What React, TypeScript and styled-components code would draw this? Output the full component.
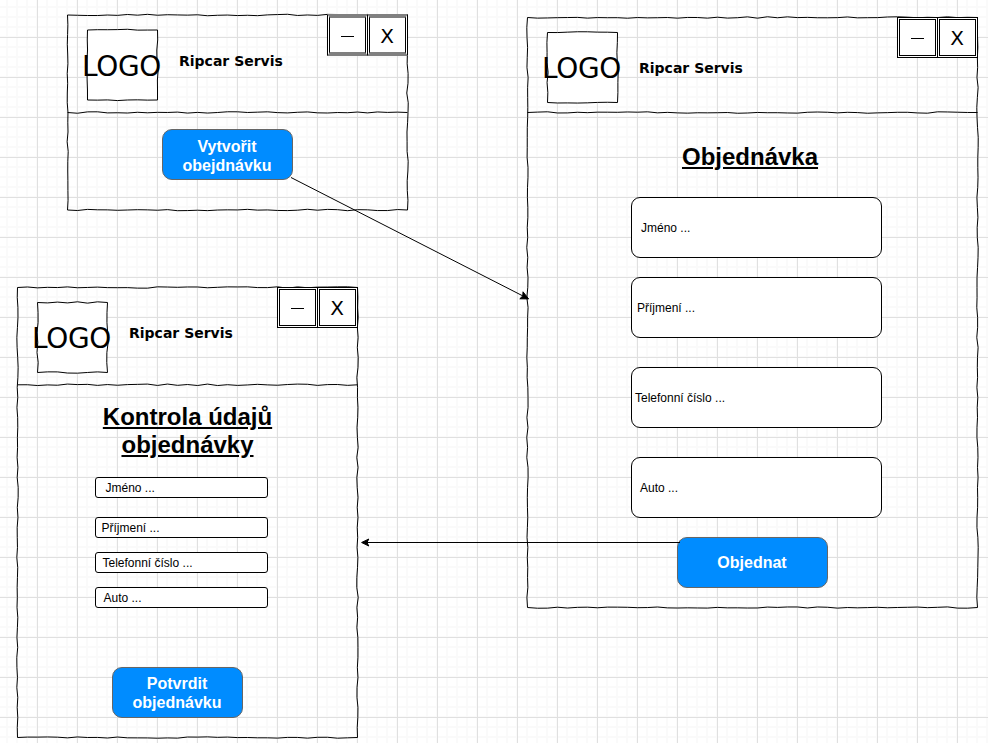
import React from 'react';
import styled, { createGlobalStyle } from 'styled-components';

const GlobalStyle = createGlobalStyle`
  *, *::before, *::after { box-sizing: border-box; }
  html, body { margin: 0; padding: 0; overflow: hidden; background: #fff; }
`;

const Canvas = styled.main`
  position: relative;
  width: 988px;
  height: 743px;
  overflow: hidden;
  color: #000;
  font-family: 'Liberation Sans', Arial, sans-serif;
  background-color: #fff;
  background-image:
    linear-gradient(to right, #e0e0e0 1px, transparent 1px),
    linear-gradient(to bottom, #e0e0e0 1px, transparent 1px),
    linear-gradient(to right, #fafafa 2px, transparent 2px),
    linear-gradient(to bottom, #fafafa 2px, transparent 2px);
  background-size: 40px 40px, 40px 40px, 10px 10px, 10px 10px;
  background-position: 37px 37px, 37px 37px, 6px 6px, 6px 6px;
`;

const Window = styled.section<{ $x: number; $y: number; $w: number; $h: number }>`
  position: absolute;
  left: ${p => p.$x}px;
  top: ${p => p.$y}px;
  width: ${p => p.$w}px;
  height: ${p => p.$h}px;
  display: flex;
  flex-direction: column;
`;

const Drawing = styled.svg`
  position: absolute;
  left: 0;
  top: 0;
  overflow: visible;
  pointer-events: none;
  fill: none;
  stroke: #000;
`;

const Header = styled.header<{ $h: number }>`
  display: flex;
  align-items: flex-start;
  flex: none;
  height: ${p => p.$h}px;
  padding-left: 20px;
`;

const LogoBox = styled.div<{ $top: number; $drop: number }>`
  position: relative;
  display: flex;
  align-items: center;
  justify-content: center;
  flex: none;
  width: 71px;
  height: 71px;
  margin-top: ${p => p.$top}px;
  padding: ${p => p.$drop}px 2px 0 0;
`;

const LogoText = styled.span`
  position: relative;
  font: 28px/32px 'DejaVu Sans', Verdana, sans-serif;
  letter-spacing: -0.4px;
  white-space: nowrap;
`;

const Brand = styled.strong<{ $top: number }>`
  margin: ${p => p.$top}px 0 0 21px;
  font: bold 14px/18px 'DejaVu Sans', Verdana, sans-serif;
  white-space: nowrap;
`;

const Controls = styled.div`
  position: relative;
  display: flex;
  margin-left: auto;
`;

const Control = styled.button<{ $soft?: boolean }>`
  width: 41px;
  height: ${p => (p.$soft ? 42 : 41)}px;
  margin: 0;
  padding: 0 1px 0 0;
  border: 3px double #000;
  ${p => p.$soft && 'border-top: 4px solid #808080; border-bottom: 4px solid #808080; padding-top: 2px;'}
  background: #fff;
  color: #000;
  font: 20px/30px 'DejaVu Sans', Verdana, sans-serif;
  display: flex;
  align-items: center;
  justify-content: center;
  & + & { margin-left: -1px; }
`;

const Dash = styled.span`
  width: 13px;
  height: 1px;
  margin-top: 1px;
  background: #000;
`;

const Body = styled.div<{ $top: number }>`
  position: relative;
  display: flex;
  flex-direction: column;
  align-items: center;
  padding-top: ${p => p.$top}px;
`;

const Title = styled.h1<{ $shift?: number }>`
  margin: 0 0 0 ${p => p.$shift ?? 0}px;
  font-size: 24px;
  line-height: 28px;
  font-weight: bold;
  text-align: center;
  text-decoration: underline;
`;

const Field = styled.div<{ $w: number; $h: number; $gap: number; $inset: number; $shift?: number }>`
  display: flex;
  align-items: center;
  position: relative;
  width: ${p => p.$w}px;
  height: ${p => p.$h}px;
  margin-top: ${p => p.$gap}px;
  margin-left: ${p => p.$shift ?? 0}px;
  padding-left: ${p => p.$inset}px;
  border: 1px solid #000;
  border-radius: ${p => (p.$h > 30 ? 9 : 3)}px;
  background: #fff;
  font-size: 12px;
  line-height: 14px;
  white-space: nowrap;
`;

const Action = styled.button<{ $w: number; $gap?: number; $shift?: number; $drop?: number }>`
  width: ${p => p.$w}px;
  height: 51px;
  margin: ${p => p.$gap ?? 0}px 0 0 ${p => p.$shift ?? 0}px;
  padding: ${p => p.$drop ?? 0}px 1px 0 0;
  border: 1px solid #666;
  border-radius: 10px;
  background: #008cff;
  color: #fff;
  font: bold 16px/19px 'Liberation Sans', Arial, sans-serif;
`;

// Small deterministic jitter, so that each edge looks drawn by hand.
function jitter(seed: number) {
  let s = seed * 7919 + 13;
  return () => {
    s = (s * 16807) % 2147483647;
    return (s / 2147483647 - 0.5) * 2;
  };
}

function edge(x1: number, y1: number, x2: number, y2: number, seed: number) {
  const next = jitter(seed);
  const len = Math.hypot(x2 - x1, y2 - y1);
  const n = Math.round(len / 10);
  const nx = -(y2 - y1) / len;
  const ny = (x2 - x1) / len;
  const pts: string[] = [];
  for (let i = 0; i <= n; i++) {
    const d = i === 0 || i === n ? 0 : next() * 0.75;
    const t = i / n;
    pts.push(`${(x1 + (x2 - x1) * t + nx * d).toFixed(2)} ${(y1 + (y2 - y1) * t + ny * d).toFixed(2)}`);
  }
  return pts;
}

function roughRect(x: number, y: number, w: number, h: number, seed: number) {
  const pts = [
    ...edge(x, y, x + w, y, seed),
    ...edge(x + w, y, x + w, y + h, seed + 1),
    ...edge(x + w, y + h, x, y + h, seed + 2),
    ...edge(x, y + h, x, y, seed + 3),
  ];
  return `M${pts.join('L')}Z`;
}

interface FrameProps { w: number; h: number; top: number; divider: number; seed: number }

const Frame = ({ w, h, top, divider, seed }: FrameProps) => (
  <Drawing width={w} height={h}>
    <path d={roughRect(0.5, top, w - 1, h - 1, seed)} />
    <path d={`M${edge(0.5, divider, w - 0.5, divider, seed + 5).join('L')}`} />
  </Drawing>
);

interface HeadProps { height: number; logoTop: number; brandTop: number; seed: number; soft?: boolean }

const WindowHeader = ({ height, logoTop, brandTop, seed, soft }: HeadProps) => (
  <Header $h={height}>
    <LogoBox $top={logoTop} $drop={soft ? 4 : 2}>
      <Drawing width={71} height={71}>
        <path fill="#fff" d={roughRect(0.5, soft ? 1 : 0.5, 70, 70, seed)} />
      </Drawing>
      <LogoText>LOGO</LogoText>
    </LogoBox>
    <Brand $top={brandTop}>Ripcar Servis</Brand>
    <Controls>
      <Control $soft={soft}><Dash /></Control>
      <Control $soft={soft}>X</Control>
    </Controls>
  </Header>
);

const App = () => (
  <Canvas>
    <GlobalStyle />

    <Window $x={67} $y={14} $w={341} $h={196}>
      <Frame w={341} h={196} top={1} divider={98.5} seed={11} />
      <WindowHeader height={99} logoTop={15} brandTop={38} seed={21} soft />
      <Body $top={16}>
        <Action $w={131} $shift={-20} $drop={2}>Vytvořit<br />obejdnávku</Action>
      </Body>
    </Window>

    <Window $x={527} $y={17} $w={451} $h={591}>
      <Frame w={451} h={591} top={0.5} divider={95.5} seed={31} />
      <WindowHeader height={96} logoTop={15} brandTop={42} seed={41} />
      <Body $top={30}>
        <Title $shift={-5}>Objednávka</Title>
        <Field $w={251} $h={61} $gap={26} $inset={9} $shift={8}>Jméno ...</Field>
        <Field $w={251} $h={61} $gap={19} $inset={5} $shift={8}>Příjmení ...</Field>
        <Field $w={251} $h={61} $gap={29} $inset={3} $shift={8}>Telefonní číslo ...</Field>
        <Field $w={251} $h={61} $gap={29} $inset={8} $shift={8}>Auto ...</Field>
        <Action $w={151} $gap={19}>Objednat</Action>
      </Body>
    </Window>

    <Window $x={17} $y={287} $w={341} $h={451}>
      <Frame w={341} h={451} top={0.5} divider={97.8} seed={51} />
      <WindowHeader height={98} logoTop={15} brandTop={37} seed={61} />
      <Body $top={18}>
        <Title>Kontrola údajů<br />objednávky</Title>
        <Field $w={173} $h={21} $gap={18} $inset={10} $shift={-13}>Jméno ...</Field>
        <Field $w={173} $h={21} $gap={19} $inset={6} $shift={-13}>Příjmení ...</Field>
        <Field $w={173} $h={21} $gap={14} $inset={7} $shift={-13}>Telefonní číslo ...</Field>
        <Field $w={173} $h={21} $gap={14} $inset={8} $shift={-13}>Auto ...</Field>
        <Action $w={131} $gap={59} $shift={-20}>Potvrdit<br />objednávku</Action>
      </Body>
    </Window>

    <Drawing width={988} height={743}>
      <path d="M291 177.5L523 296" />
      <path d="M528.6 298.9L519.8 298.8L522.8 295.9L523 291.8Z" fill="#000" />
      <path d="M680 542.5H367" />
      <path d="M361.6 542.5L368.8 539L367 542.5L368.8 546Z" fill="#000" />
    </Drawing>
  </Canvas>
);

export default App;
